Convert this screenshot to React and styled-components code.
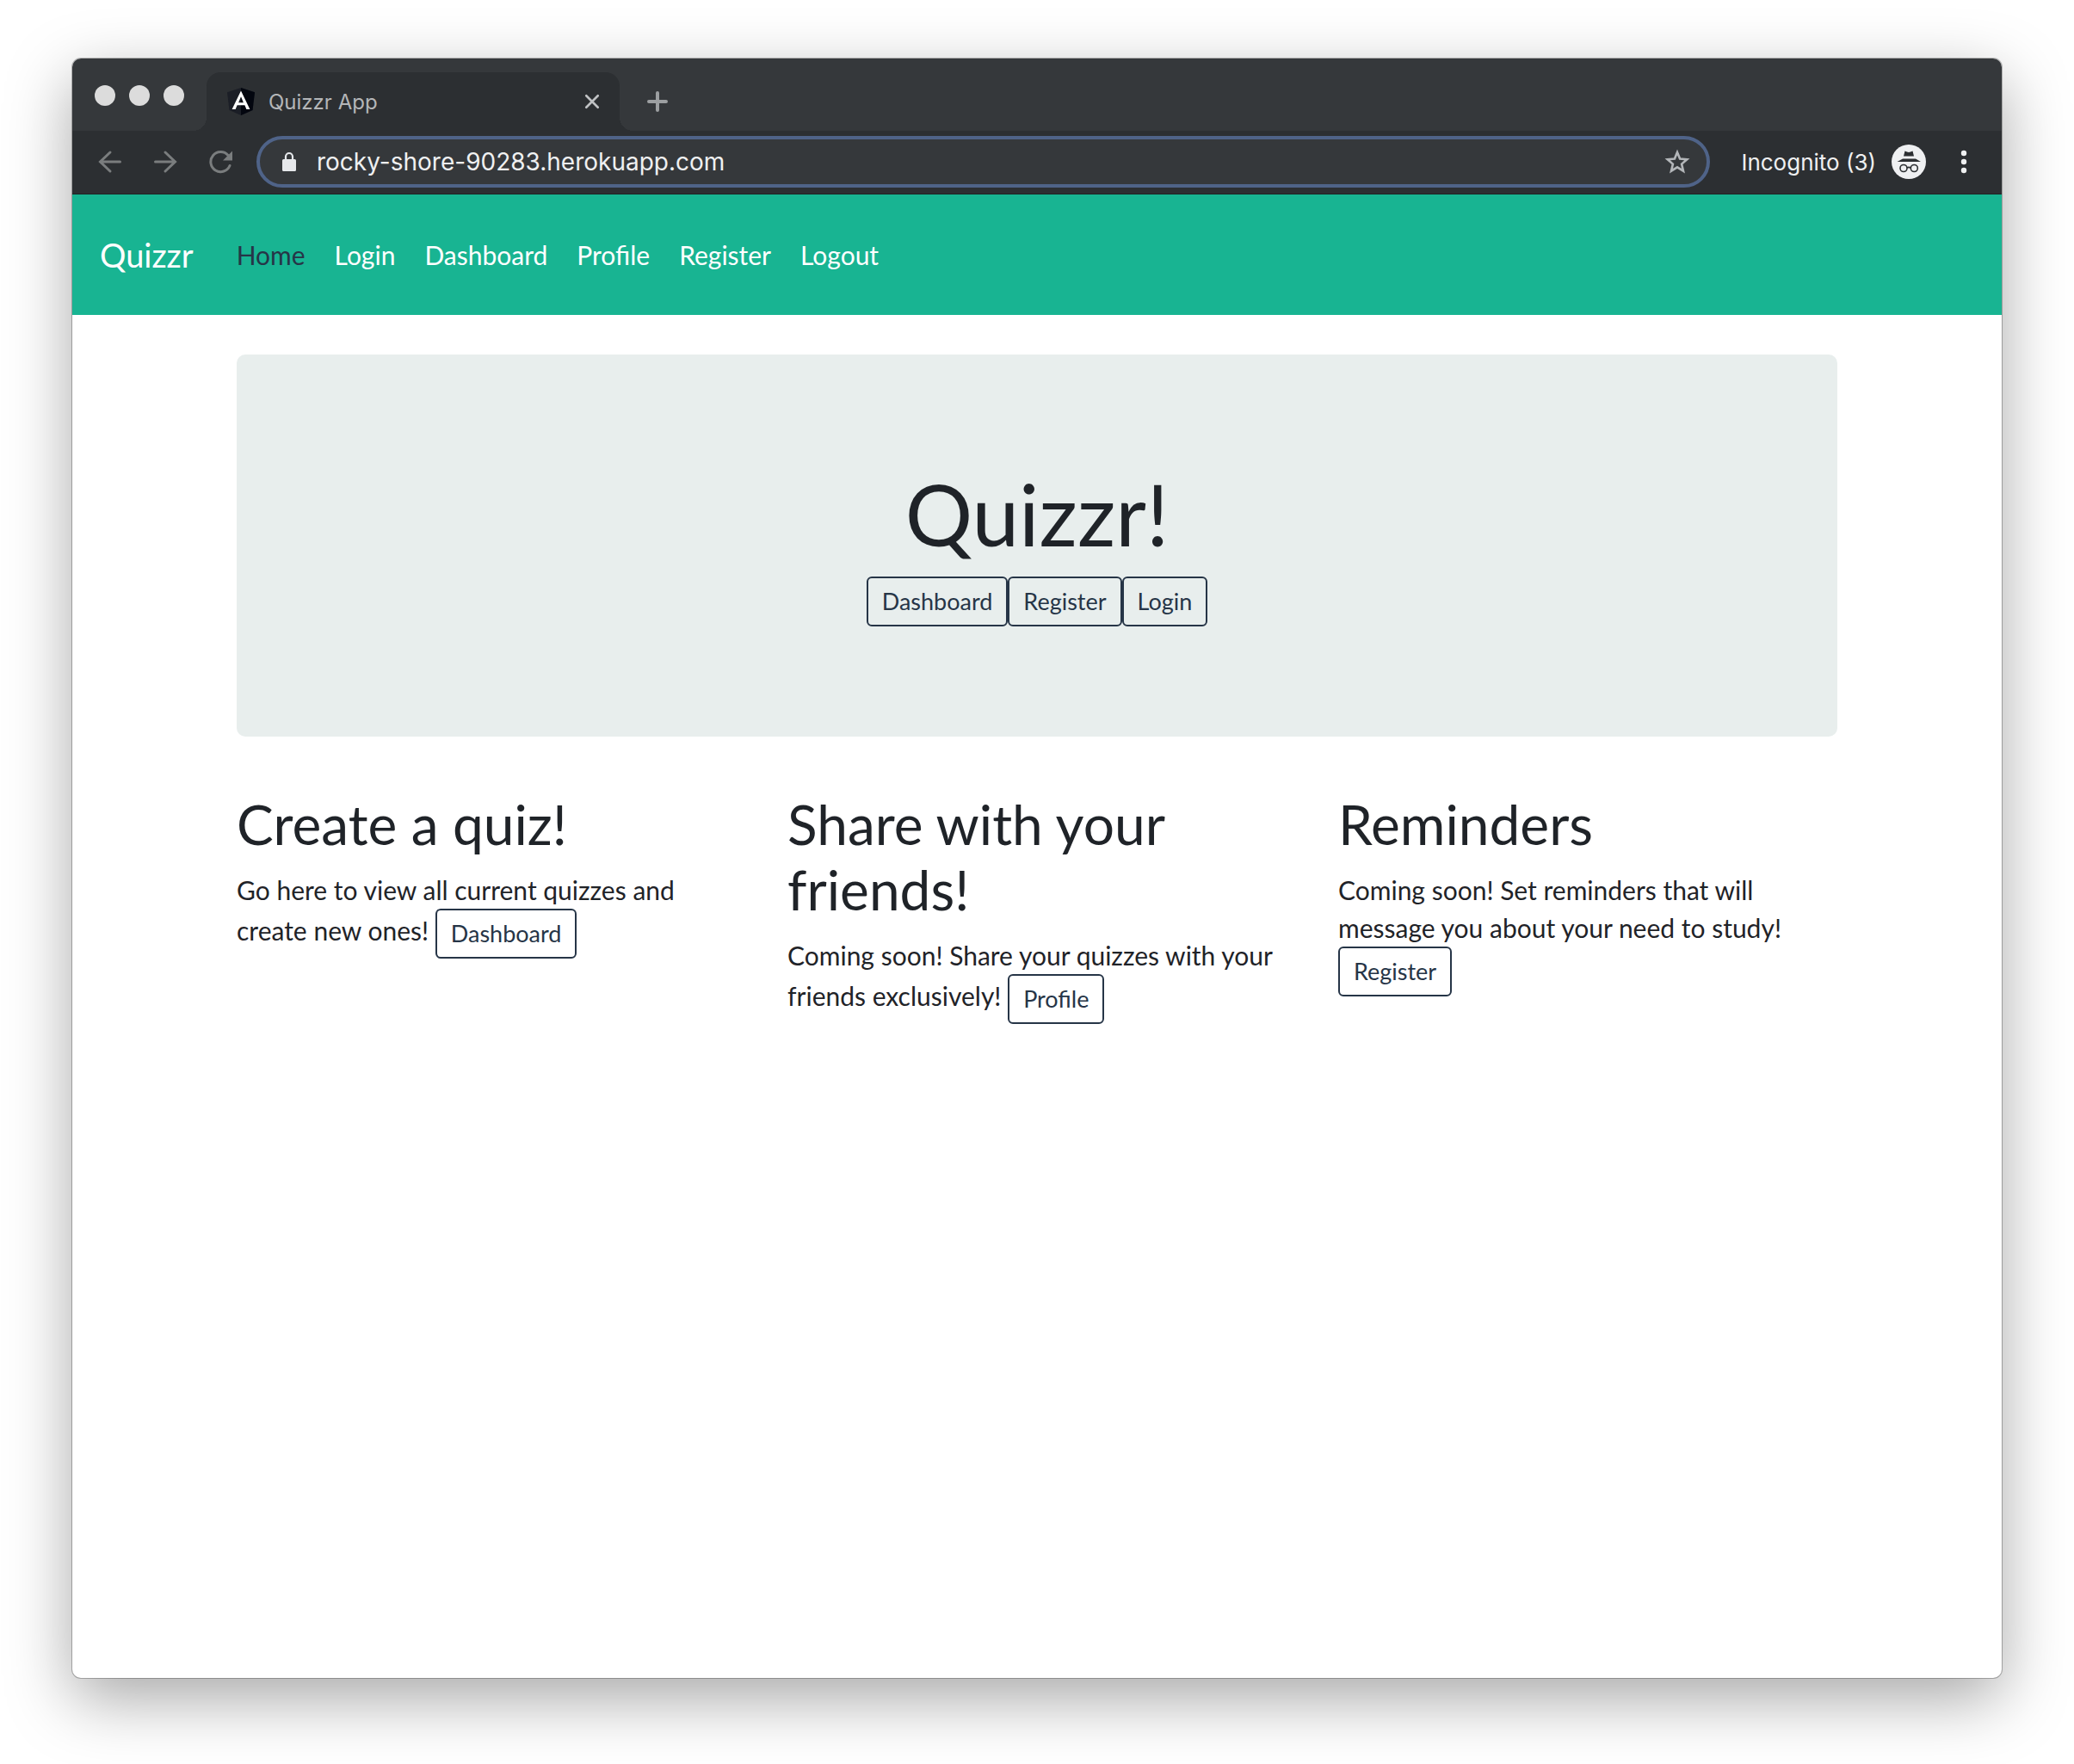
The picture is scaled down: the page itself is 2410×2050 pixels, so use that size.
import React from "react";
import styled, { createGlobalStyle } from "styled-components";

const colors = {
  frame: "#35383b",
  toolbar: "#2c2f32",
  focus: "#4f6388",
  primary: "#18b492",
  navy: "#263547",
  ink: "#1f2328",
  panel: "#e8eeed",
  icon: "#7a7d7e",
};

const GlobalStyle = createGlobalStyle`
  *, *::before, *::after { box-sizing: border-box; }
  body { margin: 0; background: #fff; font-family: Lato, "Liberation Sans", sans-serif; color: ${colors.ink}; }
  h1, h2, p, ul { margin: 0; padding: 0; font-weight: 400; }
  button, input { font: inherit; color: inherit; }
  svg { display: block; flex: none; }
`;

const Desktop = styled.div`
  min-height: 100vh;
  padding: 68px 84px 100px;
  display: flex;
`;

const Window = styled.div`
  flex: 1;
  min-width: 0;
  display: flex;
  flex-direction: column;
  border-radius: 10px;
  overflow: hidden;
  background: #fff;
  box-shadow: 0 0 0 1px rgba(0, 0, 0, 0.26), 0 24px 76px rgba(0, 0, 0, 0.35);
`;

const TabStrip = styled.div`
  display: flex;
  height: 84px;
  padding: 16px 26px 0;
  background: ${colors.frame};
  font-family: Inter, Roboto, "Liberation Sans", sans-serif;
`;

const Lights = styled.div`
  display: flex;
  gap: 16px;
  padding-top: 15px;
  width: 130px;
`;

const Light = styled.button`
  width: 24px;
  height: 24px;
  padding: 0;
  border: 0;
  border-radius: 50%;
  background: #dcdcdc;
`;

const Tab = styled.div`
  position: relative;
  display: flex;
  align-items: center;
  gap: 16px;
  width: 480px;
  padding: 0 20px 0 24px;
  border-radius: 16px 16px 0 0;
  background: ${colors.toolbar};
  color: #b4b6b8;
  font-size: 24px;

  &::before, &::after {
    content: "";
    position: absolute;
    bottom: 0;
    width: 16px;
    height: 16px;
  }
  &::before { right: 100%; background: radial-gradient(circle at 0 0, transparent 16px, ${colors.toolbar} 16px); }
  &::after { left: 100%; background: radial-gradient(circle at 100% 0, transparent 16px, ${colors.toolbar} 16px); }
`;

const TabTitle = styled.span`
  flex: 1;
`;

const IconButton = styled.button`
  display: flex;
  align-items: center;
  justify-content: center;
  flex: none;
  width: ${(p) => p.$size || 32}px;
  height: ${(p) => p.$size || 32}px;
  padding: 0;
  border: 0;
  background: none;
  color: ${(p) => p.$color || colors.icon};
`;

const NewTab = styled.div`
  display: flex;
  align-items: center;
  padding-left: 28px;
`;

const Toolbar = styled.div`
  display: flex;
  align-items: center;
  height: 74px;
  padding: 0 28px 1px;
  background: ${colors.toolbar};
  border-bottom: 1px solid #1f2123;
  font-family: Inter, Roboto, "Liberation Sans", sans-serif;
`;

const History = styled.div`
  display: flex;
  gap: 32px;
  padding-right: 26px;
`;

const AddressBar = styled.label`
  flex: 1;
  min-width: 0;
  display: flex;
  align-items: center;
  height: 60px;
  padding: 0 18px 0 22px;
  border: 4px solid ${colors.focus};
  border-radius: 30px;
  background: ${colors.frame};
`;

const Address = styled.input`
  flex: 1;
  min-width: 0;
  padding: 0;
  margin: 0 16px 0 20px;
  border: 0;
  outline: 0;
  background: none;
  color: #eff0f1;
  font-size: 28px;
  line-height: 36px;
`;

const Profile = styled.button`
  display: flex;
  align-items: center;
  gap: 18px;
  margin: 0 28px 0 36px;
  padding: 0;
  border: 0;
  background: none;
  color: #eff0f1;
  font-size: 26px;
`;

const Navbar = styled.nav`
  display: flex;
  align-items: center;
  height: 140px;
  padding: 0 32px;
  background: ${colors.primary};
`;

const Brand = styled.a`
  margin-right: 34px;
  color: #fff;
  font-size: 38px;
  line-height: 56px;
  text-decoration: none;
`;

const NavList = styled.ul`
  display: flex;
  gap: 2px;
  list-style: none;
`;

const NavLink = styled.a`
  display: block;
  padding: 16px;
  color: ${(p) => (p.$active ? colors.navy : "#fff")};
  font-size: 30px;
  line-height: 44px;
  text-decoration: none;
`;

const Container = styled.main`
  width: 100%;
  max-width: 1920px;
  margin: 0 auto;
  padding: 46px 30px 0;
`;

const Jumbotron = styled.section`
  padding: 128px 64px;
  margin-bottom: 64px;
  border-radius: 10px;
  background: ${colors.panel};
  text-align: center;
`;

const Title = styled.h1`
  margin-bottom: 16px;
  font-size: 98px;
  line-height: 114px;
`;

const ButtonRow = styled.div`
  display: flex;
  justify-content: center;
`;

const Button = styled.button`
  display: inline-block;
  padding: 8px 16px;
  border: 2px solid ${colors.navy};
  border-radius: 6px;
  background: transparent;
  color: ${colors.navy};
  font-size: 27px;
  line-height: 38px;
  vertical-align: middle;
`;

const Columns = styled.div`
  display: grid;
  grid-template-columns: repeat(3, 1fr);
  gap: 60px;
`;

const Heading = styled.h2`
  margin-bottom: 16px;
  font-size: 64px;
  line-height: 76px;
`;

const Text = styled.p`
  font-size: 30px;
  line-height: 44px;
`;

const AngularMark = () => (
  <svg width="32" height="32" viewBox="0 0 32 32" aria-hidden="true">
    <path d="M16 0 32 5.300 29.500 26 16 32 2.500 26 0 5.300Z" fill="#1b1e26" />
    <path d="M16 0 32 5.300 29.500 26 16 32Z" fill="#03060f" />
    <path d="M16 3.500 5.600 25H9.600L11.600 20.300H20.400L22.400 25H26.400ZM16 10.300 18.900 17.200H13.100Z" fill="#fff" fillRule="evenodd" />
  </svg>
);

const Stroke = ({ size = 32, width = 3, children }) => (
  <svg
    width={size}
    height={size}
    viewBox="0 0 32 32"
    fill="none"
    stroke="currentColor"
    strokeWidth={width}
    aria-hidden="true"
  >
    {children}
  </svg>
);

const Incognito = () => (
  <svg width="40" height="40" viewBox="0 0 40 40" aria-hidden="true">
    <circle cx="20" cy="20" r="20" fill="#eff0f2" />
    <path d="M14 13.500 15.500 7.500 18 8.500Q20 9.300 22 8.500L24.500 7.500 26 13.500ZM13 16.500H28L34 20H6.500Z" fill={colors.toolbar} />
    <g fill="none" stroke={colors.toolbar} strokeWidth="1.600">
      <circle cx="14" cy="27.500" r="4" />
      <circle cx="26.300" cy="27.500" r="4" />
      <path d="M18 27Q20 25.800 22.300 27" />
    </g>
  </svg>
);

const links = ["Home", "Login", "Dashboard", "Profile", "Register", "Logout"];

const features = [
  { title: "Create a quiz!", text: "Go here to view all current quizzes and create new ones!", action: "Dashboard" },
  { title: "Share with your friends!", text: "Coming soon! Share your quizzes with your friends exclusively!", action: "Profile" },
  { title: "Reminders", text: "Coming soon! Set reminders that will message you about your need to study!", action: "Register" },
];

export default function App() {
  return (
    <Desktop>
      <GlobalStyle />
      <Window>
        <TabStrip>
          <Lights>
            <Light aria-label="Close window" />
            <Light aria-label="Minimize window" />
            <Light aria-label="Zoom window" />
          </Lights>
          <Tab>
            <AngularMark />
            <TabTitle>Quizzr App</TabTitle>
            <IconButton $size={24} $color="#c0c2c4" aria-label="Close tab">
              <Stroke size={24} width={3.500}><path d="M7 7 25 25M25 7 7 25" strokeLinecap="round" /></Stroke>
            </IconButton>
          </Tab>
          <NewTab>
            <IconButton $color="#9c9fa1" aria-label="New tab">
              <Stroke width={4}><path d="M16 6V26M6 16H26" strokeLinecap="round" /></Stroke>
            </IconButton>
          </NewTab>
        </TabStrip>
        <Toolbar>
          <History>
            <IconButton aria-label="Back">
              <Stroke><path d="M27.500 16H5M16 5 4.500 16 16 27" strokeLinecap="round" /></Stroke>
            </IconButton>
            <IconButton aria-label="Forward">
              <Stroke><path d="M4.500 16H27M16 5 27.500 16 16 27" strokeLinecap="round" /></Stroke>
            </IconButton>
            <IconButton aria-label="Reload">
              <Stroke>
                <path d="M25 8.500A11.500 11.500 0 1 0 27 20.500" strokeLinecap="round" />
                <path d="M30 3.500V14.500H19Z" fill="currentColor" stroke="none" />
              </Stroke>
            </IconButton>
          </History>
          <AddressBar>
            <svg width="24" height="24" viewBox="0 0 24 24" aria-hidden="true">
              <path d="M5.500 9H18.500A1.500 1.500 0 0 1 20 10.500V21.500A1.500 1.500 0 0 1 18.500 23H5.500A1.500 1.500 0 0 1 4 21.500V10.500A1.500 1.500 0 0 1 5.500 9Z" fill="#e6e8eb" />
              <path d="M8 10V6A4 4 0 0 1 16 6V10" fill="none" stroke="#e6e8eb" strokeWidth="2.200" />
            </svg>
            <Address aria-label="Address" defaultValue="rocky-shore-90283.herokuapp.com" />
            <IconButton $color="#b3b6b9" aria-label="Bookmark">
              <Stroke width={2.600}>
                <path d="M16 5 19.100 12.500 27.300 13.200 21.100 18.600 23 26.700 16 22.400 9 26.700 10.900 18.600 4.700 13.200 12.900 12.500Z" />
              </Stroke>
            </IconButton>
          </AddressBar>
          <Profile>
            Incognito (3)
            <Incognito />
          </Profile>
          <IconButton $color="#eff0f1" aria-label="Menu">
            <svg width="32" height="32" viewBox="0 0 32 32" fill="currentColor" aria-hidden="true">
              <circle cx="16" cy="6" r="3.200" />
              <circle cx="16" cy="16" r="3.200" />
              <circle cx="16" cy="26" r="3.200" />
            </svg>
          </IconButton>
        </Toolbar>
        <Navbar>
          <Brand href="#">Quizzr</Brand>
          <NavList>
            {links.map((name) => (
              <li key={name}>
                <NavLink href={"#" + name.toLowerCase()} $active={name === "Home"}>{name}</NavLink>
              </li>
            ))}
          </NavList>
        </Navbar>
        <Container>
          <Jumbotron>
            <Title>Quizzr!</Title>
            <ButtonRow>
              <Button>Dashboard</Button>
              <Button>Register</Button>
              <Button>Login</Button>
            </ButtonRow>
          </Jumbotron>
          <Columns>
            {features.map(({ title, text, action }) => (
              <section key={title}>
                <Heading>{title}</Heading>
                <Text>
                  {text} <Button>{action}</Button>
                </Text>
              </section>
            ))}
          </Columns>
        </Container>
      </Window>
    </Desktop>
  );
}
